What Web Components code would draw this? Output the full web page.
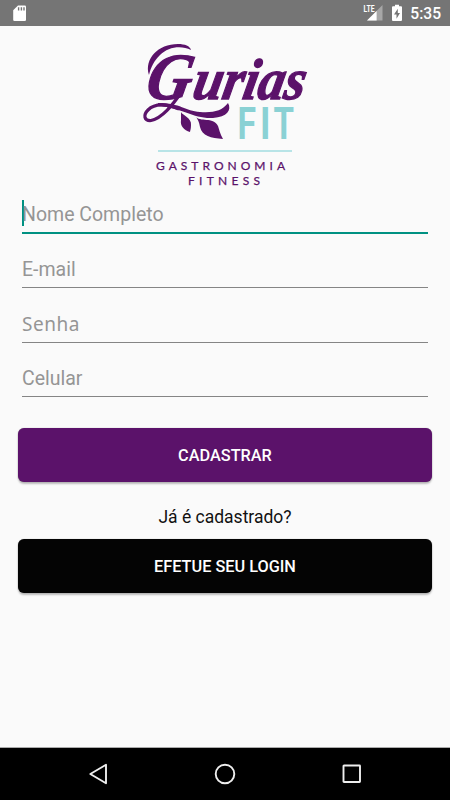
<!DOCTYPE html>
<html lang="pt-BR">
<head>
<meta charset="utf-8">
<meta name="viewport" content="width=device-width, initial-scale=1">
<title>Gurias Fit</title>
<style>
  body {
    margin: 0;
    background: #fafafa;
    font-family: Roboto, sans-serif;
  }
</style>
</head>
<body>
<signup-screen></signup-screen>

<script>
class StatusBar extends HTMLElement {
  constructor() {
    super();
    this.attachShadow({ mode: 'open' });
    this.shadowRoot.innerHTML = `
      <style>
      :host {
        display: flex;
        align-items: center;
        height: 26px;
        box-sizing: border-box;
        padding: 0 9px 0 13px;
        background: #757575;
        color: #fff;
        font-size: 15.6px;
        font-weight: 500;
      }
      svg { display: block; flex: none; }
      .signal { margin-left: auto; }
      .battery { margin: 0 8px 0 9px; }
      .time { line-height: 26px; padding-top: 2px; }
      </style>
      <svg width="14" height="18" viewBox="0 0 14 18">
        <path d="M5 1.5h6.7q1.3 0 1.3 1.3v13q0 1.2-1.3 1.2H1.5Q.2 17 .2 15.7V6.2z" fill="#fff"/>
        <path d="M5.6 3.2v3.3M8.4 3.2v3.3M11 3.2v3.3" stroke="#757575" stroke-width="1.4"/>
      </svg>
      <svg class="signal" width="20" height="18" viewBox="0 0 20 18">
        <path d="M19.5 1v15.6H4z" fill="#a7a7a7"/>
        <path d="M13.6 7v9.6H4z" fill="#fff"/>
        <text x="0.500" y="8.4" font-size="9.500" font-weight="700" fill="#fff" textLength="11" lengthAdjust="spacingAndGlyphs">LTE</text>
      </svg>
      <svg class="battery" width="10" height="18" viewBox="0 0 10 18">
        <path d="M3 .7h4v1.6h2q1 0 1 1V16q0 1-1 1H1q-1 0-1-1V3.300q0-1 1-1h2z" fill="#fff"/>
        <path d="M5.800 4.800 2 10.500h2.500v4.200L8 9H5.800z" fill="#757575"/>
      </svg>
      <span class="time"><slot></slot></span>
    `;
  }
}

class BrandLogo extends HTMLElement {
  constructor() {
    super();
    this.attachShadow({ mode: 'open' });
    this.shadowRoot.innerHTML = `
      <style>
      :host { display: block; }
      svg { display: block; margin: 0 auto; }
      .script {
        font-family: "Liberation Serif", serif;
        font-style: italic;
        font-weight: 700;
      }
      .tagline {
        font-family: Lato, sans-serif;
        font-size: 12px;
        stroke: #5b126a;
        stroke-width: .25;
      }
      </style>
      <svg width="220" height="154" viewBox="115 36 220 154" fill="#5b126a">
        <!-- sweep over the name -->
        <path d="M149 75C144 59 158 44 178 44C185 44 190 46 191 50C181 45 168 47 160 55C154 61 151 67 149 75z"/>
        <g transform="translate(0 99) skewX(-11)">
          <text class="script" stroke="#5b126a" stroke-width="1.3"><tspan x="144" font-size="66" textLength="45" lengthAdjust="spacingAndGlyphs">G</tspan><tspan x="191" font-size="58" textLength="112" lengthAdjust="spacingAndGlyphs">urias</tspan></text>
        </g>
        <!-- looped flourish with the two leaves -->
        <path d="M183 90C172 106 162 118 151 120.500C144 121 143 115 148 110C156 102 169 105 179 109" fill="none" stroke="#5b126a" stroke-width="3.200"/>
        <path d="M158 103C181 103 185 111 200 112C213 113 222 111 228 103C232 110 227 117 213 118C193 119 184 108 158 106z"/>
        <path d="M181 112C182 115 192 118 191 125C191 129 190 131 190 132C184 130 180 126 181 120z"/>
        <path d="M195 116C200 123 213 116 218 126C219 129 220 134 223 139C211 138 202 136 200 127C199 122 198 119 195 116z"/>
        <text y="139" font-size="45" font-weight="700" fill="#8ad1d4"><tspan x="237.500" textLength="18.500" lengthAdjust="spacingAndGlyphs">F</tspan><tspan x="260" textLength="10.500" lengthAdjust="spacingAndGlyphs">I</tspan><tspan x="273.500" textLength="20.500" lengthAdjust="spacingAndGlyphs">T</tspan></text>
        <path d="M158 151h134" stroke="#b8e4e7" stroke-width="1.800"/>
        <text class="tagline" x="156" y="169.500" textLength="129">GASTRONOMIA</text>
        <text class="tagline" x="188" y="185.300" textLength="72">FITNESS</text>
      </svg>
    `;
  }
}

class TextField extends HTMLElement {
  constructor() {
    super();
    this.attachShadow({ mode: 'open' });
    this.shadowRoot.innerHTML = `
      <style>
      :host {
        display: flex;
        align-items: flex-end;
        box-sizing: border-box;
        height: 54.3px;
        padding-bottom: 4.2px;
        border-bottom: 1px solid #858585;
        color: #959595;
        font-size: 19.5px;
        line-height: 26px;
        cursor: text;
      }
      :host([focused]) {
        height: 44px;
        padding-bottom: 6px;
        border-bottom: 2px solid #009182;
      }
      :host([type="password"]) {
        font-family: "Noto Sans", sans-serif;
        font-size: 19px;
        letter-spacing: .5px;
      }
      .caret { display: none; }
      :host([focused]) .caret {
        display: block;
        width: 2px;
        height: 26px;
        margin-right: -2px;
        background: #009182;
      }
      :host([focused]) .label { margin-bottom: -2px; }
      </style>
      <span class="caret"></span>
      <span class="label"><slot></slot></span>
    `;
  }
}

class ActionButton extends HTMLElement {
  constructor() {
    super();
    this.attachShadow({ mode: 'open' });
    this.shadowRoot.innerHTML = `
      <style>
      :host { display: block; }
      button {
        display: block;
        width: 100%;
        height: 54px;
        padding: 0;
        border: 0;
        border-radius: 6px;
        background: var(--button-color, #040404);
        box-shadow: 0 2px 2px rgba(0, 0, 0, .25), 0 0 1px rgba(0, 0, 0, .4);
        color: #fff;
        font: 500 16.3px Roboto, sans-serif;
        text-transform: uppercase;
      }
      </style>
      <button type="button"><slot></slot></button>
    `;
  }
}

class NavigationBar extends HTMLElement {
  constructor() {
    super();
    this.attachShadow({ mode: 'open' });
    this.shadowRoot.innerHTML = `
      <style>
      :host {
        display: flex;
        align-items: center;
        justify-content: space-between;
        box-sizing: border-box;
        height: 53px;
        padding: 0 86px;
        border-top: 1px solid #aaa;
        background: #000;
      }
      svg {
        fill: none;
        stroke: #eee;
        stroke-width: 1.9;
        stroke-linejoin: round;
      }
      </style>
      <svg width="24" height="24" viewBox="0 0 24 24"><path d="M20 2.800v18.400L4.300 12z"/></svg>
      <svg width="24" height="24" viewBox="0 0 24 24"><circle cx="12" cy="12" r="9.300"/></svg>
      <svg width="24" height="24" viewBox="0 0 24 24"><rect x="3.500" y="3.500" width="16.500" height="16.500" rx=".5"/></svg>
    `;
  }
}

class SignupScreen extends HTMLElement {
  constructor() {
    super();
    this.attachShadow({ mode: 'open' });
    this.shadowRoot.innerHTML = `
      <style>
      :host {
        display: flex;
        flex-direction: column;
        height: 100vh;
        background: #fafafa;
      }
      main { flex: 1; padding: 10px 18px 0; }
      .fields { height: 207px; padding: 0 4px; }
      .submit {
        --button-color: #5b126a;
        margin-top: 31px;
      }
      p {
        margin: 23px 0 9px;
        color: #111;
        font-size: 17.5px;
        line-height: 25px;
        text-align: center;
      }
      </style>
      <status-bar>5:35</status-bar>
      <main>
        <brand-logo></brand-logo>
        <div class="fields">
          <text-field focused>Nome Completo</text-field>
          <text-field>E-mail</text-field>
          <text-field type="password">Senha</text-field>
          <text-field>Celular</text-field>
        </div>
        <action-button class="submit">Cadastrar</action-button>
        <p>Já é cadastrado?</p>
        <action-button>Efetue seu login</action-button>
      </main>
      <navigation-bar></navigation-bar>
    `;
  }
}

customElements.define('status-bar', StatusBar);
customElements.define('brand-logo', BrandLogo);
customElements.define('text-field', TextField);
customElements.define('action-button', ActionButton);
customElements.define('navigation-bar', NavigationBar);
customElements.define('signup-screen', SignupScreen);
</script>
</body>
</html>
